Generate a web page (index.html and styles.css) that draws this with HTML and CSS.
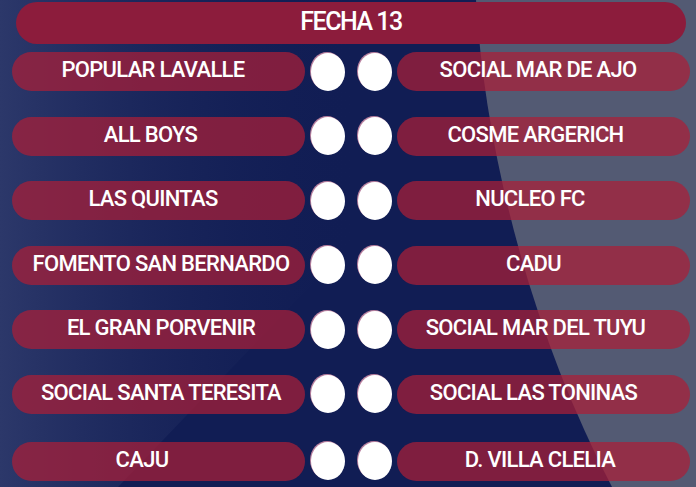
FILE: index.html
```html
<!DOCTYPE html>
<html lang="es">
<head>
<meta charset="utf-8">
<title>Fecha 13</title>
<link rel="stylesheet" href="styles.css">
</head>
<body>
<div class="board">
  <svg class="bg" width="696" height="487" viewBox="0 0 696 487" aria-hidden="true">
    <defs>
      <linearGradient id="lg" gradientUnits="userSpaceOnUse" x1="0" y1="0" x2="360" y2="0">
        <stop offset="0" stop-color="#2c386a"/>
        <stop offset="1" stop-color="#111d54" stop-opacity="0"/>
      </linearGradient>
    </defs>
    <rect x="0" y="0" width="696" height="487" fill="#111d54"/>
    <path d="M0 0 L584 0 L118 487 L0 487 Z" fill="url(#lg)"/>
    <path d="M476 0 C 485 150, 530 330, 612 487 L696 487 L696 0 Z" fill="#535a73"/>
  </svg>
  <div class="content">
    <div class="header">FECHA 13</div>
    <div class="matches">
      <div class="row"><div class="team">POPULAR LAVALLE</div><span class="dot"></span><span class="dot"></span><div class="team">SOCIAL MAR DE AJO</div></div>
      <div class="row"><div class="team r16">ALL BOYS</div><span class="dot"></span><span class="dot"></span><div class="team r16">COSME ARGERICH</div></div>
      <div class="row"><div class="team">LAS QUINTAS</div><span class="dot"></span><span class="dot"></span><div class="team r27">NUCLEO FC</div></div>
      <div class="row"><div class="team mid">FOMENTO SAN BERNARDO</div><span class="dot"></span><span class="dot"></span><div class="team r20">CADU</div></div>
      <div class="row"><div class="team mid">EL GRAN PORVENIR</div><span class="dot"></span><span class="dot"></span><div class="team r16">SOCIAL MAR DEL TUYU</div></div>
      <div class="row"><div class="team mid">SOCIAL SANTA TERESITA</div><span class="dot"></span><span class="dot"></span><div class="team r20">SOCIAL LAS TONINAS</div></div>
      <div class="row last"><div class="team r33">CAJU</div><span class="dot"></span><span class="dot"></span><div class="team r7">D. VILLA CLELIA</div></div>
    </div>
  </div>
</div>
</body>
</html>
```

FILE: styles.css
```css
html, body {
  margin: 0;
  padding: 0;
  background: #111d54;
}
.board {
  position: relative;
  width: 696px;
  height: 487px;
  overflow: hidden;
  font-family: Roboto, "Liberation Sans", sans-serif;
  color: #fff;
}
.bg {
  position: absolute;
  left: 0;
  top: 0;
}
.content {
  position: relative;
  padding: 2px 0 0 12px;
}
.header {
  margin-left: 4px;
  width: 670px;
  height: 42px;
  border-radius: 21px;
  background: #8c1c3c;
  font-size: 25px;
  font-weight: 500;
  letter-spacing: -1.5px;
  display: flex;
  align-items: center;
  justify-content: center;
  box-sizing: border-box;
  padding: 0 0 4px 0;
}
.matches {
  margin-top: 8px;
  display: flex;
  flex-direction: column;
  gap: 25.6px;
}
.row {
  display: flex;
  align-items: center;
  height: 39px;
}
.row.last {
  margin-top: 2.4px;
}
.team {
  width: 293px;
  height: 39px;
  border-radius: 20px;
  background: rgba(170, 30, 55, 0.72);
  font-size: 22px;
  font-weight: 500;
  letter-spacing: -0.7px;
  display: flex;
  align-items: center;
  justify-content: center;
  box-sizing: border-box;
  padding: 0 11px 4px 0;
  white-space: nowrap;
}
.team.mid {
  padding: 0 0 4px 5px;
}
.team.r7 {
  padding-right: 7px;
}
.team.r16 {
  padding-right: 16px;
}
.team.r20 {
  padding-right: 20px;
}
.team.r27 {
  padding-right: 27px;
}
.team.r33 {
  padding-right: 33px;
}
.dot {
  width: 34px;
  height: 38px;
  border-radius: 50%;
  background: #fff;
  box-shadow: -1px -1px 0 rgba(255, 170, 190, 0.7);
  margin-left: 6px;
}
.dot + .dot {
  margin-left: 13px;
  margin-right: 5px;
}
```
